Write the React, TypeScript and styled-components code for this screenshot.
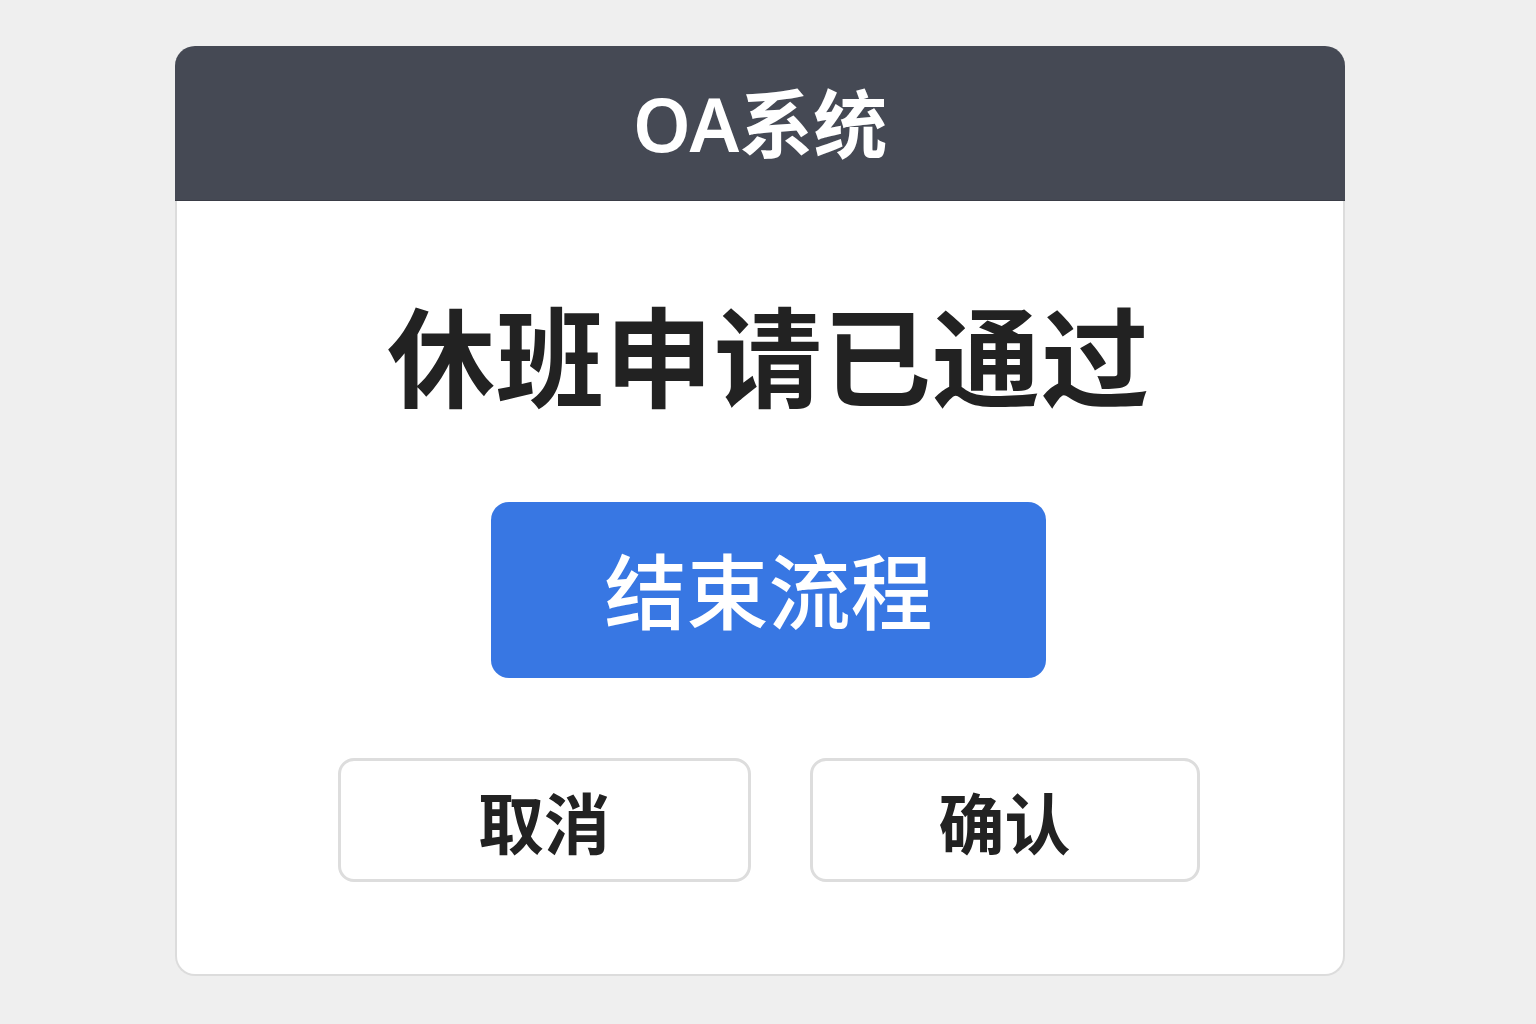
import React from "react";
import styled, { createGlobalStyle } from "styled-components";

const Global = createGlobalStyle`
  html, body {
    margin: 0;
    padding: 0;
    background: #efefef;
  }
  body {
    font-family: "Noto Sans", "Noto Sans CJK SC", sans-serif;
  }
`;

const Page = styled.div`
  width: 1536px;
  height: 1024px;
  padding-top: 46px;
  padding-left: 175px;
  box-sizing: border-box;
`;

const Card = styled.div`
  width: 1170px;
  height: 930px;
  display: flex;
  flex-direction: column;
`;

const Header = styled.div`
  height: 155px;
  flex-shrink: 0;
  background: #454954;
  display: flex;
  align-items: center;
  justify-content: center;
  border-radius: 20px 20px 0 0;
  box-shadow: inset 0 -1px 0 #3a3d46;
`;

const Title = styled.h1`
  margin: 0;
  color: #ffffff;
  font-family: "Noto Sans", "Noto Sans CJK SC", sans-serif;
  font-weight: 600;
  font-size: 74px;
  line-height: 1;
`;

const Body = styled.div`
  flex: 1;
  box-sizing: border-box;
  background: #ffffff;
  border: 2px solid #dcdcdc;
  border-top: none;
  border-radius: 0 0 20px 20px;
  display: flex;
  flex-direction: column;
  align-items: center;
  padding-left: 17px;
  padding-top: 97px;
`;

const Heading = styled.h2`
  margin: 0;
  color: #222222;
  font-family: "Noto Sans CJK SC", sans-serif;
  font-weight: 700;
  font-size: 108px;
  line-height: 108px;
  letter-spacing: 1px;
`;

const PrimaryButton = styled.button`
  margin-top: 96px;
  width: 555px;
  height: 176px;
  border: none;
  border-radius: 18px;
  background: #3877e3;
  color: #ffffff;
  font-family: "Noto Sans CJK SC", sans-serif;
  font-weight: 500;
  font-size: 82px;
  line-height: 1;
  display: flex;
  align-items: center;
  justify-content: center;
  padding: 0 0 4px;
  cursor: pointer;
`;

const ButtonRow = styled.div`
  margin-top: 80px;
  display: flex;
  gap: 59px;
`;

const OutlineButton = styled.button<{ $w: number }>`
  width: ${(p) => p.$w}px;
  height: 124px;
  box-sizing: border-box;
  background: #ffffff;
  border: 3px solid #dddddd;
  border-radius: 16px;
  color: #222222;
  font-family: "Noto Sans CJK SC", sans-serif;
  font-weight: 700;
  font-size: 66px;
  line-height: 1;
  display: flex;
  align-items: center;
  justify-content: center;
  padding: 0;
  cursor: pointer;
`;

export default function App() {
  return (
    <>
      <Global />
      <Page>
        <Card>
          <Header>
            <Title>OA系统</Title>
          </Header>
          <Body>
            <Heading>休班申请已通过</Heading>
            <PrimaryButton>结束流程</PrimaryButton>
            <ButtonRow>
              <OutlineButton $w={413}>取消</OutlineButton>
              <OutlineButton $w={390}>确认</OutlineButton>
            </ButtonRow>
          </Body>
        </Card>
      </Page>
    </>
  );
}
